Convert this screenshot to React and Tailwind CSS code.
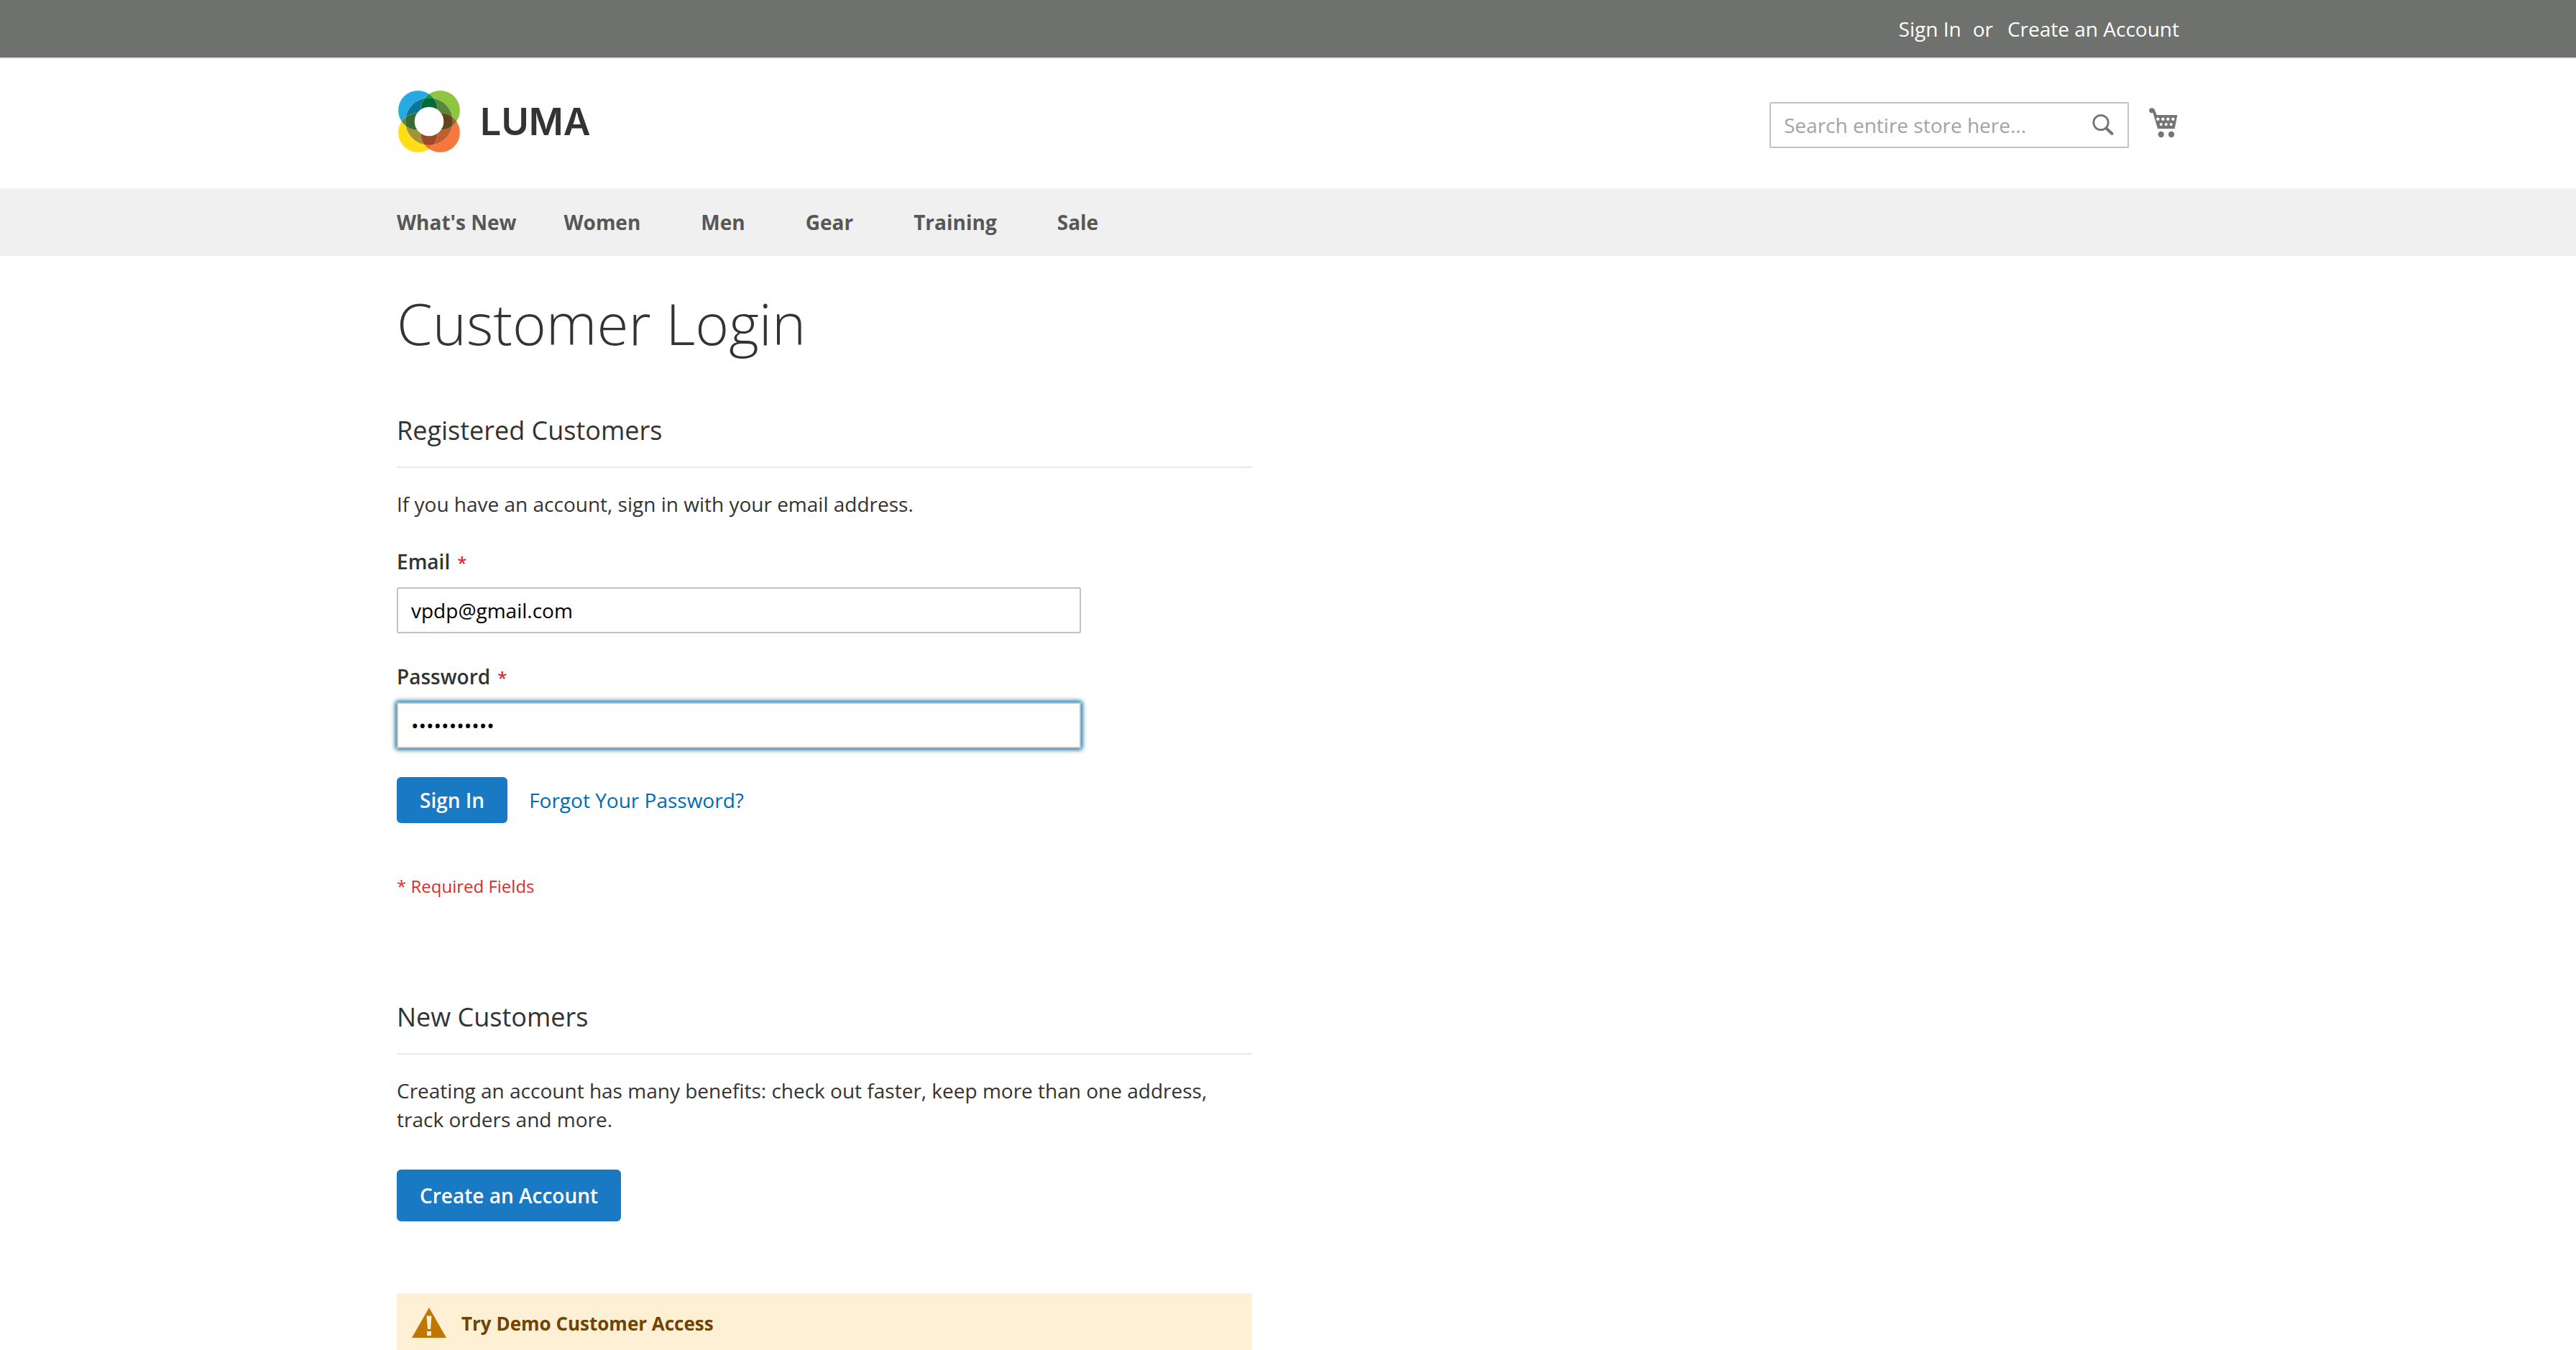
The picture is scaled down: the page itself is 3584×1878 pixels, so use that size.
const NAV = ["What's New", 'Women', 'Men', 'Gear', 'Training', 'Sale'];

function LumaMark() {
  return (
    <svg width="92" height="92" viewBox="0 0 92 92" aria-hidden="true">
      <defs>
        <clipPath id="tl"><circle cx="29.5" cy="29.5" r="27.5" /></clipPath>
        <clipPath id="tr"><circle cx="60.5" cy="29.5" r="27.5" /></clipPath>
        <clipPath id="bl"><circle cx="29.5" cy="60.5" r="27.5" /></clipPath>
        <clipPath id="ring"><circle cx="45" cy="45" r="33" /></clipPath>
      </defs>
      <circle cx="29.5" cy="29.5" r="27.5" fill="#27a9e1" />
      <circle cx="60.5" cy="29.5" r="27.5" fill="#8ec641" />
      <circle cx="29.5" cy="60.5" r="27.5" fill="#ffde17" />
      <circle cx="60.5" cy="60.5" r="27.5" fill="#f4793b" />
      <circle cx="60.5" cy="29.5" r="27.5" fill="#009d4c" clipPath="url(#tl)" />
      <circle cx="29.5" cy="60.5" r="27.5" fill="#55873c" clipPath="url(#tl)" />
      <circle cx="60.5" cy="60.5" r="27.5" fill="#94632e" clipPath="url(#tr)" />
      <circle cx="60.5" cy="60.5" r="27.5" fill="#f06a23" clipPath="url(#bl)" />
      <g clipPath="url(#ring)">
        <circle cx="29.5" cy="29.5" r="27.5" fill="#0c7699" />
        <circle cx="60.5" cy="29.5" r="27.5" fill="#56863b" />
        <circle cx="29.5" cy="60.5" r="27.5" fill="#a69234" />
        <circle cx="60.5" cy="60.5" r="27.5" fill="#c15e30" />
        <circle cx="60.5" cy="29.5" r="27.5" fill="#006b37" clipPath="url(#tl)" />
        <circle cx="29.5" cy="60.5" r="27.5" fill="#3a6b33" clipPath="url(#tl)" />
        <circle cx="60.5" cy="60.5" r="27.5" fill="#62451d" clipPath="url(#tr)" />
        <circle cx="60.5" cy="60.5" r="27.5" fill="#a04a24" clipPath="url(#bl)" />
      </g>
      <g fill="none" stroke="#fff" strokeOpacity="0.35" strokeWidth="0.6">
        <circle cx="29.5" cy="29.5" r="27.5" />
        <circle cx="60.5" cy="29.5" r="27.5" />
        <circle cx="29.5" cy="60.5" r="27.5" />
        <circle cx="60.5" cy="60.5" r="27.5" />
        <circle cx="45" cy="45" r="33" />
      </g>
      <circle cx="45" cy="45" r="20.3" fill="#fff" />
    </svg>
  );
}

function CartIcon() {
  return (
    <svg width="46" height="46" viewBox="0 0 138 138" fill="#757575" aria-hidden="true">
      <path d="M12 16A11 11 0 0 1 23 7C32 7 36 12 38 20L44 36H130L119 93H48L31 36L28 26C18 31 12 24 12 16Z" />
      <circle cx="62" cy="117" r="12.5" />
      <circle cx="105" cy="117" r="12.5" />
      <g fill="#fff">
        <circle cx="49" cy="53" r="6.500" />
        <circle cx="70" cy="53" r="6.500" />
        <circle cx="91" cy="53" r="6.500" />
        <circle cx="112" cy="53" r="6.500" />
        <circle cx="62" cy="75" r="6" />
        <circle cx="83" cy="75" r="6" />
        <circle cx="104" cy="75" r="6" />
      </g>
    </svg>
  );
}

function Required() {
  return <span className="ml-2.5 text-2xl font-semibold text-[#e02b27]">*</span>;
}

function SectionHeading({ children }) {
  return (
    <h2 className="mb-[30px] border-b-2 border-[#e8e8e8] pb-[30px] text-4xl leading-10">{children}</h2>
  );
}

export default function App() {
  return (
    <div className="h-screen overflow-hidden bg-white font-['Open_Sans',sans-serif] text-[28px] leading-10 text-[#333]">
      <header>
        <div className="border-b-2 border-[#e8e8e8] bg-[#6e716e] text-white">
          <div className="mx-auto flex h-20 max-w-[2560px] items-center justify-end px-10">
            <a href="#signin">Sign In</a>
            <span className="mr-5 ml-4">or</span>
            <a href="#create">Create an Account</a>
          </div>
        </div>
        <div className="mx-auto flex h-[180px] max-w-[2560px] items-start justify-between px-10 pt-[42px]">
          <a href="#home" className="flex items-center gap-6 font-['Inter',sans-serif] text-[52px] font-semibold">
            <LumaMark />
            <span>LUMA</span>
          </a>
          <div className="flex items-start gap-6 pt-[18px]">
            <form className="relative" onSubmit={(e) => e.preventDefault()}>
              <input
                type="text"
                aria-label="Search"
                placeholder="Search entire store here..."
                className="h-16 w-[500px] rounded-[2px] border-2 border-[#c2c2c2] pr-16 pl-[18px] placeholder:text-[#a3a3a3]"
              />
              <button aria-label="Search" className="absolute top-4 right-4">
                <svg width="36" height="36" viewBox="0 0 36 36" fill="none" stroke="#757575" aria-hidden="true">
                  <circle cx="13" cy="12.5" r="10.2" strokeWidth="2.8" />
                  <path d="M20.500 20.500L28.500 28" strokeWidth="4" strokeLinecap="round" />
                </svg>
              </button>
            </form>
            <a href="#cart" aria-label="My Cart" className="pt-1.5">
              <CartIcon />
            </a>
          </div>
        </div>
      </header>
      <nav className="bg-[#f0f0f0] font-bold text-[#575757]">
        <ul className="mx-auto flex h-[94px] max-w-[2560px] items-center gap-[84px] px-10">
          {NAV.map((item) => (
            <li key={item} className="first:-mr-[18px]">
              <a href="#nav">{item}</a>
            </li>
          ))}
        </ul>
      </nav>
      <main className="mx-auto max-w-[2560px] px-10 pt-[49px]">
        <h1 className="mb-[86px] text-[80px] leading-[88px] font-light">Customer Login</h1>
        <div className="w-[48%]">
          <section>
            <SectionHeading>Registered Customers</SectionHeading>
            <form onSubmit={(e) => e.preventDefault()}>
              <p>If you have an account, sign in with your email address.</p>
              <div className="mt-10 flex flex-col gap-4">
                <label htmlFor="email" className="font-semibold">Email<Required /></label>
                <input
                  id="email"
                  type="email"
                  defaultValue="vpdp@gmail.com"
                  className="h-16 w-4/5 rounded-[2px] border-2 border-[#c2c2c2] px-[18px] text-black"
                />
              </div>
              <div className="mt-10 flex flex-col gap-4">
                <label htmlFor="password" className="font-semibold">Password<Required /></label>
                <input
                  id="password"
                  type="password"
                  defaultValue="password123"
                  className="h-16 w-4/5 rounded-[2px] border-2 border-[#c2c2c2] px-[18px] text-black shadow-[0_0_6px_2px_#00699d]"
                />
              </div>
              <div className="mt-10 flex items-center gap-[30px]">
                <button className="h-16 rounded-md bg-[#1979c3] px-8 font-semibold text-white">Sign In</button>
                <a href="#forgot" className="text-[#006bb4]">Forgot Your Password?</a>
              </div>
              <p className="mt-[68px] text-2xl leading-10 text-[#e02b27]">* Required Fields</p>
            </form>
          </section>
          <section className="mt-[142px]">
            <SectionHeading>New Customers</SectionHeading>
            <p>Creating an account has many benefits: check out faster, keep more than one address, track orders and more.</p>
            <a href="#create" className="mt-[50px] inline-flex h-[72px] items-center rounded-md bg-[#1979c3] px-8 font-semibold text-white">
              Create an Account
            </a>
          </section>
          <div className="mt-[100px] flex h-32 items-start gap-5 bg-[#fdf0d5] px-5 pt-5 text-[26px] font-bold text-[#6f4400]">
            <svg width="50" height="44" viewBox="0 0 50 44" aria-hidden="true">
              <path d="M25 0L49 42H1Z" fill="#c07600" />
              <path d="M21.500 11.500H28.500L27 30H23ZM22 33H28V39H22Z" fill="#fdf0d5" />
            </svg>
            <p className="pt-0.5">Try Demo Customer Access</p>
          </div>
        </div>
      </main>
    </div>
  );
}
